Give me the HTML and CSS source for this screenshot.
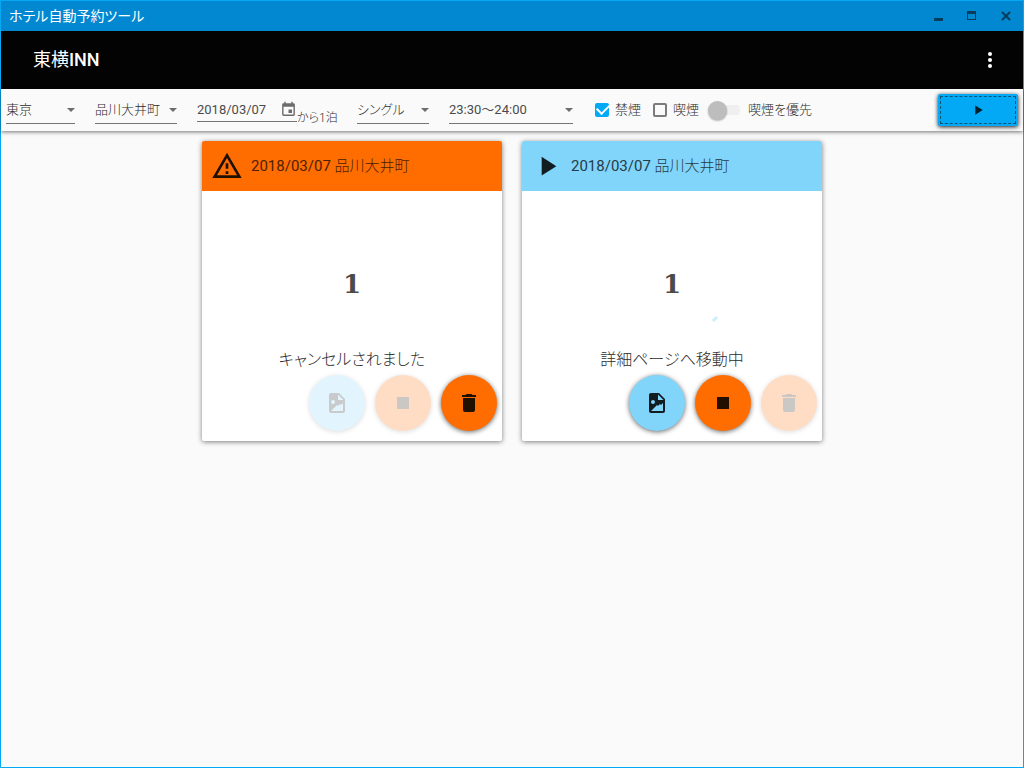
FILE: index.html
```html
<!DOCTYPE html>
<html lang="ja">
<head>
<meta charset="utf-8">
<meta name="viewport" content="width=device-width, initial-scale=1">
<title>ホテル自動予約ツール</title>
<link rel="stylesheet" href="styles.css">
</head>
<body>
<svg class="defs" width="0" height="0" aria-hidden="true">
  <symbol id="i-play" viewBox="0 0 24 24"><path d="M8 5.14v14l11-7z"/></symbol>
  <symbol id="i-alert" viewBox="0 0 24 24"><path d="M12 2 1 21h22M12 6l7.53 13H4.47M11 10v4h2v-4m-2 6v2h2v-2"/></symbol>
  <symbol id="i-image" viewBox="0 0 24 24"><path fill-rule="evenodd" d="M6 2h8l6 6v12a2 2 0 0 1-2 2H6a2 2 0 0 1-2-2V4a2 2 0 0 1 2-2zM13 3.500V9h5.500zM6 20h12v-8l-2 2-1-1-2 2-1-1zM8 9a2 2 0 1 0 0 4 2 2 0 0 0 0-4z"/></symbol>
  <symbol id="i-stop" viewBox="0 0 24 24"><path d="M6 6h12v12H6z"/></symbol>
  <symbol id="i-delete" viewBox="0 0 24 24"><path d="M19 4h-3.500l-1-1h-5l-1 1H5v2h14M6 19a2 2 0 0 0 2 2h8a2 2 0 0 0 2-2V7H6z"/></symbol>
</svg>
<div class="window">
  <header class="titlebar">
    <span>ホテル自動予約ツール</span>
    <div class="window-buttons">
      <button type="button" aria-label="最小化"><svg viewBox="0 0 12 12"><path d="M2 8h9v3H2z"/></svg></button>
      <button type="button" aria-label="最大化"><svg viewBox="0 0 12 12"><path fill-rule="evenodd" d="M1 1h9v9H1zM2 4v5h7V4z"/></svg></button>
      <button type="button" aria-label="閉じる"><svg viewBox="0 0 12 12"><path d="m2 2 8 8m0-8-8 8" fill="none" stroke="currentColor" stroke-width="2"/></svg></button>
    </div>
  </header>
  <div class="appbar">
    <h1><span class="brand">東横</span>INN</h1>
    <button type="button" class="more" aria-label="メニュー"><svg viewBox="0 0 24 24"><circle cx="12" cy="6" r="2"/><circle cx="12" cy="12" r="2"/><circle cx="12" cy="18" r="2"/></svg></button>
  </div>
  <form class="toolbar">
    <div class="fields">
      <label class="field pref"><select aria-label="都道府県"><option>東京</option></select></label>
      <label class="field hotel"><select aria-label="ホテル"><option>品川大井町</option></select></label>
      <div class="stay">
        <div class="date">
          <input type="text" value="2018/03/07" aria-label="宿泊日">
          <button type="button" aria-label="カレンダー"><svg viewBox="0 0 24 24"><path d="M19 19H5V8h14m-3-7v2H8V1H6v2H5a2 2 0 0 0-2 2v14a2 2 0 0 0 2 2h14a2 2 0 0 0 2-2V5a2 2 0 0 0-2-2h-1V1h-2m1 11h-5v5h5z"/></svg></button>
        </div>
        <span class="nights">から1泊</span>
      </div>
      <label class="field room"><select aria-label="部屋タイプ"><option>シングル</option></select></label>
      <label class="field time"><select aria-label="チェックイン時刻"><option>23:30～24:00</option></select></label>
      <div class="options">
        <label class="check"><input type="checkbox" checked>禁煙</label>
        <label class="check"><input type="checkbox">喫煙</label>
        <label class="switch"><input type="checkbox" role="switch">喫煙を優先</label>
      </div>
    </div>
    <button type="button" class="run" aria-label="開始"><svg viewBox="0 0 24 24"><use href="#i-play"/></svg></button>
  </form>
  <main class="cards">
    <article class="card">
      <h2 class="card-head warn"><svg viewBox="0 0 24 24"><use href="#i-alert"/></svg><span>2018/03/07 <span class="place">品川大井町</span></span></h2>
      <div class="count">1</div>
      <p class="status">キャンセルされました</p>
      <div class="actions">
        <button type="button" class="fab blue" aria-label="画像" disabled><svg viewBox="0 0 24 24"><use href="#i-image"/></svg></button>
        <button type="button" class="fab orange" aria-label="停止" disabled><svg viewBox="0 0 24 24"><use href="#i-stop"/></svg></button>
        <button type="button" class="fab orange" aria-label="削除"><svg viewBox="0 0 24 24"><use href="#i-delete"/></svg></button>
      </div>
    </article>
    <article class="card">
      <h2 class="card-head active"><svg viewBox="0 0 24 24"><use href="#i-play"/></svg><span>2018/03/07 <span class="place">品川大井町</span></span></h2>
      <div class="count">1<svg class="spinner" viewBox="0 0 8 8"><path d="m2 6 4-4" stroke="#caeefd" stroke-width="3"/></svg></div>
      <p class="status">詳細ページへ移動中</p>
      <div class="actions">
        <button type="button" class="fab blue" aria-label="画像"><svg viewBox="0 0 24 24"><use href="#i-image"/></svg></button>
        <button type="button" class="fab orange" aria-label="停止"><svg viewBox="0 0 24 24"><use href="#i-stop"/></svg></button>
        <button type="button" class="fab orange" aria-label="削除" disabled><svg viewBox="0 0 24 24"><use href="#i-delete"/></svg></button>
      </div>
    </article>
  </main>
</div>
</body>
</html>
```
FILE: styles.css
```css
* { box-sizing: border-box; }
body {
  margin: 0;
  background: #fafafa;
  color: #2c2c2c;
  font: 300 13px/20px Roboto, "Noto Sans CJK JP", sans-serif;
  font-feature-settings: "palt";
}
button, input, select { font: inherit; color: inherit; font-feature-settings: inherit; }
button { padding: 0; border: 0; background: none; }
svg { display: block; fill: currentColor; }
.defs { position: absolute; }
.window {
  min-height: 100vh;
  border: 1px solid #03a9f4;
  display: flex;
  flex-direction: column;
}
.titlebar {
  height: 30px;
  padding: 0 8px;
  display: flex;
  align-items: center;
  justify-content: space-between;
  background: #0288d1;
  color: #fff;
  font-size: 14px;
  font-weight: 400;
}
.window-buttons { display: flex; gap: 22px; padding-right: 3px; }
.window-buttons button { color: #063c5c; }
.window-buttons svg { width: 12px; height: 12px; }
.appbar {
  height: 58px;
  padding: 0 21px 0 32px;
  display: flex;
  align-items: center;
  justify-content: space-between;
  background: #030303;
  color: #fff;
}
.appbar h1 { margin: 0; font-size: 18px; font-weight: 500; font-feature-settings: normal; }
.brand { font-weight: 400; }
.more svg { width: 24px; height: 24px; }
.toolbar {
  min-height: 42px;
  padding: 5px;
  display: flex;
  align-items: center;
  justify-content: space-between;
  gap: 8px;
  background: #fafafa;
  box-shadow: 0 1px 4px rgba(0, 0, 0, .55);
}
.fields { display: flex; align-items: flex-start; gap: 20px; }
.field { display: block; position: relative; }
.field::after {
  content: "";
  position: absolute;
  right: 0;
  top: 14px;
  border: 4px solid transparent;
  border-top-color: #6c6c6c;
  border-bottom: 0;
}
.field select {
  width: 100%;
  height: 30px;
  padding: 3px 0 0;
  border: 0;
  border-bottom: 1px solid #757575;
  border-radius: 0;
  appearance: none;
  background: none;
  outline: 0;
}
.pref { width: 69px; }
.hotel { width: 82px; }
.room { width: 72px; }
.time { width: 124px; font-weight: 400; color: #4b4b4b; }
.stay { display: flex; }
.date {
  width: 100px;
  height: 28px;
  padding: 4px 0 0;
  display: flex;
  align-items: center;
  border-bottom: 1px solid #757575;
  font-weight: 400;
  color: #4b4b4b;
}
.date input { flex: 1; min-width: 0; padding: 0; border: 0; background: none; outline: 0; }
.date svg { width: 17px; height: 17px; color: #6c6c6c; }
.nights { width: 40px; padding-top: 14px; font-size: 12px; line-height: 20px; white-space: nowrap; margin-bottom: -2px; }
.options { display: flex; height: 32px; align-items: center; }
.check, .switch { display: flex; align-items: center; }
.check { gap: 6px; margin-right: 11px; }
.check input {
  appearance: none;
  width: 14px;
  height: 14px;
  margin: 0 0 0 1px;
  border: 2px solid #7b7b7b;
  border-radius: 2px;
  display: grid;
  place-items: center;
}
.check:first-child input { margin-left: 2px; }
.check input:checked { border-color: #03a9f4; background: #03a9f4; }
.check input:checked::after {
  content: "";
  width: 10px;
  height: 6px;
  border: solid #fff;
  border-width: 0 0 2px 2px;
  transform: translateY(-2px) rotate(-45deg);
}
.switch { gap: 8px; margin-left: -2px; }
.switch input {
  appearance: none;
  width: 32px;
  height: 20px;
  margin: 0;
  display: flex;
  align-items: center;
  background: linear-gradient(#efefef, #efefef) 10px 5px / 22px 10px no-repeat;
  border-radius: 10px;
}
.switch input::before {
  content: "";
  width: 19px;
  height: 19px;
  border-radius: 50%;
  background: #bdbdbd;
  box-shadow: 0 1px 2px rgba(0, 0, 0, .3);
}
.run {
  width: 80px;
  height: 32px;
  display: grid;
  place-items: center;
  border-radius: 2px;
  background: #03a9f4;
  color: #041e2a;
  box-shadow: 0 1px 4px rgba(0, 0, 0, .9);
  outline: 1px dashed #0b5375;
  outline-offset: -3px;
}
.run svg { width: 16px; height: 16px; }
.cards {
  padding: 10px;
  display: flex;
  flex-wrap: wrap;
  justify-content: center;
  gap: 20px;
}
.card {
  width: 300px;
  min-height: 300px;
  display: flex;
  flex-direction: column;
  border-radius: 2px;
  overflow: hidden;
  background: #fff;
  box-shadow: 0 1px 5px rgba(0, 0, 0, .5);
}
.card-head {
  height: 50px;
  margin: 0;
  padding: 0 9px;
  display: flex;
  align-items: center;
  gap: 8px;
  font-size: 15px;
  font-weight: 400;
}
.place { font-weight: 300; }
.card-head svg { width: 32px; height: 32px; }
.warn { background: #ff6d00; color: #4c2100; }
.warn svg { color: #211000; }
.active { background: #81d4fa; color: #253b46; }
.active svg { color: #121d22; }
.count {
  flex: 1;
  position: relative;
  padding-top: 79px;
  text-align: center;
  color: #4b4b4b;
  font: 700 26px/28px "DejaVu Serif", serif;
}
.spinner { position: absolute; left: 189px; top: 124px; width: 8px; height: 8px; }
.status { margin: 0 0 3px; text-align: center; font-size: 16px; line-height: 24px; }
.actions { padding: 0 5px 10px; display: flex; justify-content: flex-end; gap: 10px; }
.fab {
  width: 56px;
  height: 56px;
  display: grid;
  place-items: center;
  border-radius: 50%;
  box-shadow: 0 1px 5px rgba(0, 0, 0, .6);
}
.fab svg { width: 24px; height: 24px; }
.blue { background: #81d4fa; color: #121d22; }
.orange { background: #ff6d00; color: #211000; }
.fab:disabled { opacity: .23; }
```
